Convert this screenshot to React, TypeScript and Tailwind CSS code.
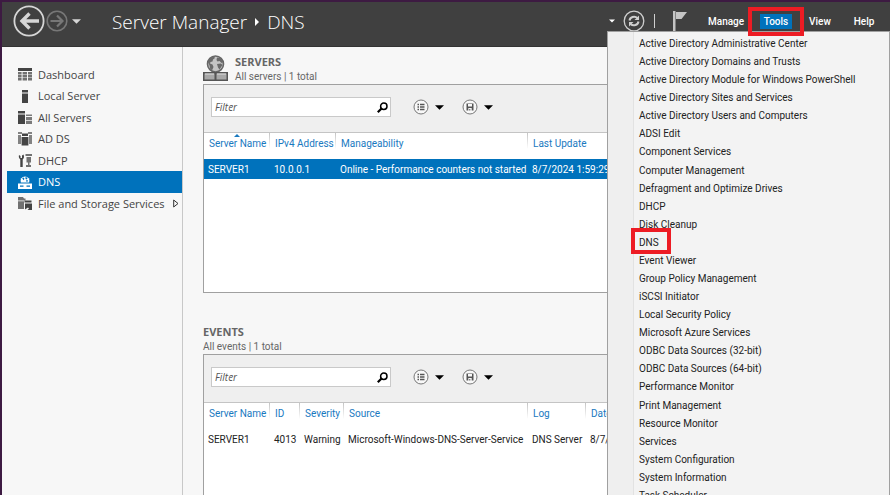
import React from "react";

const tools = [
  "Active Directory Administrative Center",
  "Active Directory Domains and Trusts",
  "Active Directory Module for Windows PowerShell",
  "Active Directory Sites and Services",
  "Active Directory Users and Computers",
  "ADSI Edit",
  "Component Services",
  "Computer Management",
  "Defragment and Optimize Drives",
  "DHCP",
  "Disk Cleanup",
  "DNS",
  "Event Viewer",
  "Group Policy Management",
  "iSCSI Initiator",
  "Local Security Policy",
  "Microsoft Azure Services",
  "ODBC Data Sources (32-bit)",
  "ODBC Data Sources (64-bit)",
  "Performance Monitor",
  "Print Management",
  "Resource Monitor",
  "Services",
  "System Configuration",
  "System Information",
  "Task Scheduler",
];

function Caret({ className }: { className: string }) {
  return (
    <svg viewBox="0 0 10 5" className={className} fill="currentColor" aria-hidden="true">
      <path d="M0 0h10L5 5z" />
    </svg>
  );
}

function NavIcon({ name }: { name: string }) {
  return (
    <svg viewBox="0 0 14 14" className="h-[14px] w-[14px] shrink-0" fill="currentColor" aria-hidden="true">
      {name === "Dashboard" && (
        <>
          <path d="M0 0h14v3H0z" />
          <path opacity=".75" d="M0 4h3.6v2.4H0zM0 7h3.6v2.4H0zM0 10h3.6v2.4H0zM4.6 4h4.4v2.4H4.6zM4.6 7h4.4v2.4H4.6zM4.6 10h4.4v2.4H4.6zM10 4h4v2.4h-4zM10 7h4v2.4h-4zM10 10h4v2.4h-4z" />
        </>
      )}
      {name === "Local Server" && <path d="M4 0h6v2.6H4zM4 3.6h6V13H4z" />}
      {name === "All Servers" && (
        <>
          <path d="M0 0h7v2.6H0zM0 3.6h7V13H0z" />
          <path opacity=".7" d="M8 3.5h6V5H8zM8 6h6v3H8zM8 9.7h6V13H8z" />
        </>
      )}
      {name === "AD DS" && (
        <>
          <path opacity=".65" d="M0 0h4v2H0zM0 3h3v9H0zM10 0h4v2h-4zM11 3h3v9h-3z" />
          <path d="M4 1.5h6V4H4zM3.6 5h6.800v8.500H3.600z" />
        </>
      )}
      {name === "DHCP" && (
        <>
          <path d="M1 1l1.500 1v2H4V1.500L5.500.500C6.500 2.500 6 4.500 4.700 5.500V13H2.300V5.500C1 4.500.500 2.500 1 1z" />
          <path opacity=".75" d="M7.500 0H14v2H7.500zM8.500 3H13v5.600H8.500zM10 8.600h1.500V11H13v2H8v-2h2z" />
        </>
      )}
      {name === "DNS" && (
        <>
          <path d="M2.800 7.500a4.500 4.500 0 1 1 8.400 0z" />
          <path fill="#0072bc" d="M4.200 3.200l1.300-.8 1 1.300-1 1.500zM7.500 2l2 .8-.5 1.700-1.500-.5zM8 5.500l1.500-.5.5 1.500H8z" />
          <path fillRule="evenodd" d="M0 8.500h14V14H0zM2 10.500v1.200h3.500v-1.200zM8.500 10.500v1.200H12v-1.200z" />
        </>
      )}
      {name === "File and Storage Services" && (
        <>
          <path opacity=".75" d="M0 0h5l1 1.500h1.500v2H0zM0 4.300h6V12H0z" />
          <path d="M6.500 3.500h7v2h-7zM7 6.500h7V13H9.500l1.500-1.500-1-1-3 2z" />
        </>
      )}
    </svg>
  );
}

function ServersIcon() {
  return (
    <svg viewBox="0 0 25 26" className="h-[26px] w-[25px] shrink-0" aria-hidden="true">
      <circle cx="12.500" cy="9" r="8" fill="#c4c4c4" stroke="#666" strokeWidth="1.600" />
      <path fill="#6a6a6a" d="M5 7l2-4 4-1.500 1 1.500-2 1.500-.5 2-2 .5-.5 1.500 2.500 1 1 2.500-1.500 3.500-2-2-.5-3zM14 2.500l3.500.5 2.500 4-1.500 1-2-2-2 .5-1-1.500zM14 9l4-.5 1.500 1.500-3 4.500-1.500-2z" />
      <path fill="#a8a8a8" stroke="#555" strokeWidth="1.500" d="M.75 17.750h11.500v7.500H.75zM12.750 17.750h11.500v7.500H12.750z" />
      <path stroke="#ddd" d="M2 19h9M14 19h9" />
    </svg>
  );
}

function Toolbar({ label }: { label: string }) {
  return (
    <div className="flex h-[47px] items-start bg-[#efefef] pt-3 pl-[7px]">
      <div className="flex h-5 w-[180px] items-center border border-[#c9c9c9] bg-white">
        <input
          aria-label={label}
          placeholder="Filter"
          className="h-full w-full min-w-0 bg-transparent pl-[3px] font-['Open_Sans',sans-serif] text-[10px] italic outline-none placeholder:text-[#555]"
        />
        <button aria-label="Search" className="mr-[2px] text-black">
          <svg viewBox="0 0 11 11" className="h-[11px] w-[11px]" fill="none" stroke="currentColor">
            <circle cx="6.800" cy="4.200" r="3.200" strokeWidth="1.500" />
            <path d="M4.500 6.500L.8 10.200" strokeWidth="2.200" />
          </svg>
        </button>
      </div>
      <div className="ml-[22px] flex h-5 items-center gap-[18px] text-black">
        <button aria-label="Options" className="flex items-center gap-[6px]">
          <svg viewBox="0 0 16 16" className="h-4 w-4" fill="none" stroke="#555">
            <circle cx="8" cy="8" r="7" fill="#f8f8f8" stroke="#777" />
            <path d="M4.500 5.500H6M4.500 8H6M4.500 10.500H6M7 5.500h4.500M7 8h4.500M7 10.500h4.500" strokeWidth="1.400" />
          </svg>
          <Caret className="h-[5px] w-[9px]" />
        </button>
        <button aria-label="Save" className="flex items-center gap-[6px]">
          <svg viewBox="0 0 16 16" className="h-4 w-4">
            <circle cx="8" cy="8" r="7" fill="#f8f8f8" stroke="#777" />
            <path fill="#555" fillRule="evenodd" d="M4.500 4.500h7v7h-7zM6 5v2.500h4V5zM6.300 9v2.500h1V10h1v1.500h1.400V9z" />
          </svg>
          <Caret className="h-[5px] w-[9px]" />
        </button>
      </div>
    </div>
  );
}

type Column = { label: string; value: string; width: string };

function DataTable({ columns, selected }: { columns: Column[]; selected?: boolean }) {
  return (
    <table className="w-full min-w-[480px] table-fixed border-t border-[#c4c4c4] text-[10px] whitespace-nowrap">
      <thead>
        <tr className="h-[26px] text-left text-[#1979bf]">
          {columns.map((c, i) => (
            <th key={c.label} className={`relative p-0 pl-[5px] align-top leading-[22px] font-normal ${c.width}`}>
              {selected && i === 0 && (
                <svg viewBox="0 0 6 3" className="absolute top-[1px] left-[30px] h-[3px] w-[6px]" fill="currentColor">
                  <path d="M0 3h6L3 0z" />
                </svg>
              )}
              {i > 0 && <span className="absolute top-0 -left-px h-4 w-px bg-linear-to-b from-[#c4c4c4] to-white" />}
              {c.label}
            </th>
          ))}
        </tr>
      </thead>
      <tbody>
        <tr className={selected ? "h-5 bg-[#0072bc] text-white" : "h-5 text-[#222]"}>
          {columns.map((c) => (
            <td key={c.label} className="p-0 pt-[2px] pl-1">{c.value}</td>
          ))}
        </tr>
      </tbody>
    </table>
  );
}

const serverColumns: Column[] = [
  { label: "Server Name", value: "SERVER1", width: "w-[66px]" },
  { label: "IPv4 Address", value: "10.0.0.1", width: "w-[66px]" },
  { label: "Manageability", value: "Online - Performance counters not started", width: "w-[192px]" },
  { label: "Last Update", value: "8/7/2024 1:59:29", width: "" },
];

const eventColumns: Column[] = [
  { label: "Server Name", value: "SERVER1", width: "w-[66px]" },
  { label: "ID", value: "4013", width: "w-[30px]" },
  { label: "Severity", value: "Warning", width: "w-[44px]" },
  { label: "Source", value: "Microsoft-Windows-DNS-Server-Service", width: "w-[184px]" },
  { label: "Log", value: "DNS Server", width: "w-[58px]" },
  { label: "Date and Time", value: "8/7/2024", width: "" },
];

const navItems = ["Dashboard", "Local Server", "All Servers", "AD DS", "DHCP", "DNS", "File and Storage Services"];

export default function App() {
  return (
    <div className="relative flex h-screen flex-col overflow-hidden border-t-2 border-l-2 border-[#3d1a42] bg-[#f7f7f7] font-[Roboto,sans-serif] text-[#333]">
      <header className="flex h-[45px] shrink-0 items-start border-b border-[#333] bg-[#404040] text-white">
        <div className="flex h-[38px] items-center pl-[11px]">
          <button aria-label="Back">
            <svg viewBox="0 0 32 32" className="h-8 w-8" fill="none" stroke="#d6d6d6">
              <circle cx="16" cy="16" r="14.600" strokeWidth="1.800" />
              <path d="M26 16H10M16.500 8.500L9 16l7.500 7.500" strokeWidth="3.400" />
            </svg>
          </button>
          <button aria-label="Forward" className="ml-px">
            <svg viewBox="0 0 22 22" className="h-[22px] w-[22px]" fill="none" stroke="#777">
              <circle cx="11" cy="11" r="9.800" strokeWidth="1.600" />
              <path d="M4.500 11H16M11 5.500l5.500 5.500-5.500 5.500" strokeWidth="2.200" />
            </svg>
          </button>
          <button aria-label="History" className="ml-1 text-[#d6d6d6]">
            <Caret className="h-[5px] w-[9px]" />
          </button>
          <h1 className="ml-[31px] flex items-center pt-[2px] font-['Open_Sans',sans-serif] text-[19px] leading-6 font-light whitespace-nowrap">
            Server Manager
            <svg viewBox="0 0 4 8" className="mx-2 h-2 w-1" fill="currentColor"><path d="M0 0l4 4-4 4z" /></svg>
            DNS
          </h1>
        </div>
        <div className="ml-auto flex h-[38px] items-center pr-[14px] text-[10px] font-medium">
          <button aria-label="Recent"><Caret className="h-[4px] w-[6px]" /></button>
          <button aria-label="Refresh" className="ml-2">
            <svg viewBox="0 0 22 22" className="h-[22px] w-[22px]" fill="none" stroke="#cfcfcf">
              <circle cx="11" cy="11" r="9.800" strokeWidth="1.300" />
              <path d="M6.500 10.500C7 7 11.500 5.500 14.500 8M15.500 11.500C15 15 10.500 16.500 7.500 14" strokeWidth="2" />
              <path d="M16 5.500v4.500h-4.500zM6 16.500V12h4.500z" fill="#cfcfcf" stroke="none" />
            </svg>
          </button>
          <span className="ml-[9px] h-[14px] w-px bg-[#cfcfcf]" />
          <button aria-label="Notifications" className="ml-[18px]">
            <svg viewBox="0 0 14 20" className="h-5 w-[14px]" fill="#c4c4c4">
              <path d="M0 0h2.500v20H0zM3 1h11L8.500 8H3z" />
            </svg>
          </button>
          <nav className="ml-[21px] flex items-center leading-4">
            <button className="w-9 pt-px">Manage</button>
            <div className="relative z-20 ml-4">
              <button className="flex h-[15px] w-8 items-center justify-center bg-[#0072bc] pt-px">Tools</button>
              <span className="pointer-events-none absolute -inset-x-3 -inset-y-[7px] border-4 border-[#ed1c24]" />
            </div>
            <button className="ml-4 w-6 pt-px">View</button>
            <button className="ml-5 w-6 pt-px">Help</button>
          </nav>
        </div>
      </header>

      <div className="flex min-h-0 flex-1">
        <aside className="w-[181px] shrink-0 border-r border-[#c8c8c8] pt-[17px] pl-[5px]">
          <nav className="grid h-[150px] auto-rows-fr">
            {navItems.map((n) => (
              <a
                key={n}
                href="#"
                className={`flex min-w-0 items-center gap-[6px] pt-px pl-[11px] font-['Open_Sans',sans-serif] text-[11px] whitespace-nowrap ${n === "DNS" ? "bg-[#0072bc] text-white" : "text-[#444]"}`}
              >
                <NavIcon name={n} />
                {n}
                {n === "File and Storage Services" && (
                  <svg viewBox="0 0 6 9" className="mr-[3px] ml-auto h-[9px] w-[6px] shrink-0" fill="none" stroke="#333">
                    <path d="M.7 1l4.300 3.500L.7 8z" />
                  </svg>
                )}
              </a>
            ))}
          </nav>
        </aside>

        <main className="min-w-0 flex-1 overflow-hidden pt-2 pl-5">
          <section>
            <div className="flex items-start gap-[7px]">
              <ServersIcon />
              <div className="text-[#666]">
                <h2 className="font-['Open_Sans',sans-serif] text-[11px] leading-[14px] font-bold">SERVERS</h2>
                <p className="pt-px text-[10px] leading-[14px]">All servers | 1 total</p>
              </div>
            </div>
            <div className="h-[209px] border border-[#a0a0a0] bg-white">
              <Toolbar label="Filter servers" />
              <DataTable columns={serverColumns} selected />
            </div>
          </section>
          <section className="mt-8">
            <h2 className="font-['Open_Sans',sans-serif] text-[11px] leading-[14px] font-bold text-[#666]">EVENTS</h2>
            <p className="pt-px text-[10px] leading-[14px] text-[#666]">All events | 1 total</p>
            <div className="h-[209px] border border-[#a0a0a0] bg-white">
              <Toolbar label="Filter events" />
              <DataTable columns={eventColumns} />
            </div>
          </section>
        </main>
      </div>

      <div className="absolute top-[29px] right-0 -bottom-[11px] z-10 w-[283px] border border-[#a0a0a0] bg-[#f3f3f3] pt-[3px]">
        <div className="absolute inset-y-0 left-0 w-[26px] border-r border-[#e2e2e2] bg-[#efefef]" />
        <ul className="relative grid h-full auto-rows-fr text-[10px] text-[#222]">
          {tools.map((t) => (
            <li key={t} className="flex items-center pl-[31px]">
              <button className="relative leading-[18px] whitespace-nowrap">
                {t}
                {t === "DNS" && <span className="pointer-events-none absolute -top-[6px] -right-3 -bottom-[2px] -left-2 border-4 border-[#ed1c24]" />}
              </button>
            </li>
          ))}
        </ul>
      </div>
    </div>
  );
}
